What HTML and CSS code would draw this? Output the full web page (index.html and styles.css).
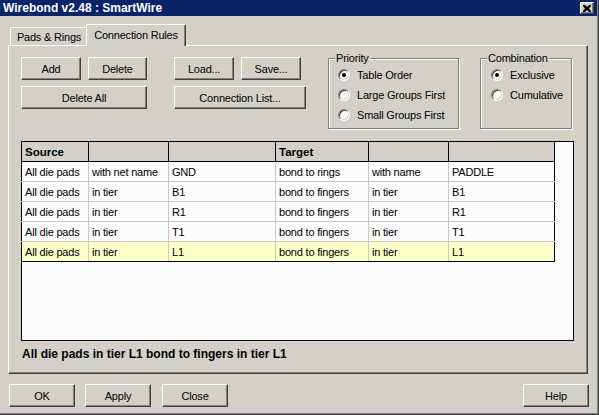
FILE: index.html
```html
<!DOCTYPE html>
<html>
<head>
<meta charset="utf-8">
<title>Wirebond v2.48 : SmartWire</title>
<link rel="stylesheet" href="styles.css">
</head>
<body>
<div class="window">
  <div class="titlebar">
    <span class="title">Wirebond v2.48 : SmartWire</span>
    <span class="close-btn">
      <svg width="8" height="7" viewBox="0 0 8 7"><path d="M0 0h2l2 2 2-2h2v1L6 3.5 8 6v1H6L4 5 2 7H0V6l2-2.5L0 1z" fill="#000"/></svg>
    </span>
  </div>
  <div class="tabs">
    <div class="tab">Pads &amp; Rings</div>
    <div class="tab active">Connection Rules</div>
  </div>
  <div class="panel">
    <div class="controls">
      <div class="btn-grid g1">
        <button class="btn">Add</button>
        <button class="btn">Delete</button>
        <button class="btn wide">Delete All</button>
      </div>
      <div class="btn-grid g2">
        <button class="btn">Load...</button>
        <button class="btn">Save...</button>
        <button class="btn wide">Connection List...</button>
      </div>
      <div class="group priority">
        <span class="group-label">Priority</span>
        <div class="radio-row"><span class="radio checked"></span><span>Table Order</span></div>
        <div class="radio-row"><span class="radio"></span><span>Large Groups First</span></div>
        <div class="radio-row"><span class="radio"></span><span>Small Groups First</span></div>
      </div>
      <div class="group combination">
        <span class="group-label">Combination</span>
        <div class="radio-row"><span class="radio checked"></span><span>Exclusive</span></div>
        <div class="radio-row"><span class="radio"></span><span>Cumulative</span></div>
      </div>
    </div>
    <div class="listview">
      <table class="grid">
        <colgroup>
          <col class="c1"><col class="c2"><col class="c3"><col class="c4"><col class="c5"><col class="c6">
        </colgroup>
        <thead>
          <tr><th>Source</th><th></th><th></th><th>Target</th><th></th><th></th></tr>
        </thead>
        <tbody>
          <tr><td>All die pads</td><td>with net name</td><td>GND</td><td>bond to rings</td><td>with name</td><td>PADDLE</td></tr>
          <tr><td>All die pads</td><td>in tier</td><td>B1</td><td>bond to fingers</td><td>in tier</td><td>B1</td></tr>
          <tr><td>All die pads</td><td>in tier</td><td>R1</td><td>bond to fingers</td><td>in tier</td><td>R1</td></tr>
          <tr><td>All die pads</td><td>in tier</td><td>T1</td><td>bond to fingers</td><td>in tier</td><td>T1</td></tr>
          <tr class="selected"><td>All die pads</td><td>in tier</td><td>L1</td><td>bond to fingers</td><td>in tier</td><td>L1</td></tr>
        </tbody>
      </table>
    </div>
    <div class="status">All die pads in tier L1 bond to fingers in tier L1</div>
  </div>
  <div class="footer">
    <button class="btn fbtn">OK</button>
    <button class="btn fbtn">Apply</button>
    <button class="btn fbtn close">Close</button>
    <button class="btn fbtn help">Help</button>
  </div>
</div>
</body>
</html>
```
FILE: styles.css
```css
* { box-sizing: border-box; }
html, body { margin: 0; padding: 0; }
body {
  width: 599px;
  height: 415px;
  overflow: hidden;
  background: #d4d0c8;
  font-family: "Liberation Sans", Arial, sans-serif;
  font-size: 11px;
  letter-spacing: -0.2px;
  color: #000;
}
.window {
  width: 599px;
  height: 415px;
  background: #d4d0c8;
  border-right: 1px solid #404040;
  border-bottom: 1px solid #404040;
  box-shadow: inset -1px -1px 0 #808080;
  display: flex;
  flex-direction: column;
}
.titlebar {
  height: 16px;
  background: #0a246a;
  margin-right: 1px;
  display: flex;
  align-items: center;
  justify-content: space-between;
  padding: 0 3px 0 3px;
}
.title {
  color: #fff;
  font-weight: bold;
  font-size: 12px;
  letter-spacing: 0;
  line-height: 16px;
  white-space: nowrap;
}
.close-btn {
  width: 14px;
  height: 12px;
  background: #d4d0c8;
  border: 1px solid;
  border-color: #fff #404040 #404040 #fff;
  box-shadow: inset -1px -1px 0 #808080;
  display: flex;
  align-items: center;
  justify-content: center;
}
.tabs {
  display: flex;
  align-items: flex-end;
  height: 29px;
  padding-left: 10px;
}
.tab {
  height: 18px;
  width: 78px;
  border: 1px solid;
  border-bottom: none;
  border-color: #fff #404040 #404040 #fff;
  border-radius: 2px 2px 0 0;
  box-shadow: inset -1px 0 0 #808080;
  padding-top: 3px;
  text-align: center;
  white-space: nowrap;
}
.tab.active {
  height: 22px;
  width: 100px;
  margin-left: -2px;
  margin-bottom: -1px;
  padding-top: 4px;
  background: #d4d0c8;
  position: relative;
  z-index: 1;
}
.panel {
  margin-left: 8px;
  width: 580px;
  height: 329px;
  border: 1px solid;
  border-color: #fff #404040 #404040 #fff;
  box-shadow: inset -1px -1px 0 #808080;
  padding: 11px 0 0 12px;
  display: flex;
  flex-direction: column;
}
.controls {
  display: flex;
  height: 72px;
}
.btn {
  font-family: inherit;
  font-size: 11px;
  letter-spacing: -0.2px;
  color: #000;
  background: #d4d0c8;
  border: 1px solid;
  border-color: #fff #404040 #404040 #fff;
  box-shadow: inset -1px -1px 0 #808080;
  padding: 0;
  margin: 0;
  height: 23px;
  border-radius: 0;
}
.btn-grid {
  display: grid;
  grid-template-rows: 23px 23px;
  row-gap: 6px;
  column-gap: 7px;
  align-content: start;
}
.btn-grid .wide { grid-column: 1 / span 2; }
.g1 { grid-template-columns: 60px 59px; }
.g2 { grid-template-columns: 60px 60px; margin-left: 27px; }
.g2 .wide { width: 132px; }
.group {
  position: relative;
  margin-top: 1px;
  height: 71px;
  border: 1px solid #808080;
  box-shadow: inset 1px 1px 0 #fff, 1px 1px 0 #fff;
  padding: 6px 0 0 9px;
}
.priority { margin-left: 27px; width: 131px; }
.combination { margin-left: 21px; width: 92px; padding-left: 10px; }
.group-label {
  position: absolute;
  top: -8px;
  left: 6px;
  background: #d4d0c8;
  padding: 0 1px;
  line-height: 14px;
}
.radio-row {
  height: 20px;
  display: flex;
  align-items: center;
  gap: 7px;
  white-space: nowrap;
}
.radio {
  width: 12px;
  height: 12px;
  flex: none;
  border-radius: 50%;
  background: #fff;
  border: 1px solid;
  border-color: #808080 #fff #fff #808080;
  box-shadow: inset 1px 1px 0 #404040, inset -1px -1px 0 #d4d0c8;
  display: flex;
  align-items: center;
  justify-content: center;
}
.radio.checked::after {
  content: "";
  width: 4px;
  height: 4px;
  border-radius: 50%;
  background: #000;
}
.listview {
  margin-top: 12px;
  width: 553px;
  height: 200px;
  border: 1px solid #000;
  background: #fcfcfc;
}
.grid {
  border-collapse: collapse;
  table-layout: fixed;
  width: 534px;
  border-left: 1px solid #000;
  margin-left: -1px;
  margin-top: -1px;
}
.grid .c1 { width: 67px; }
.grid .c2 { width: 80px; }
.grid .c3 { width: 107px; }
.grid .c4 { width: 93px; }
.grid .c5 { width: 80px; }
.grid .c6 { width: 106px; }
.grid th {
  height: 20px;
  background: #d4d0c8;
  border-top: 1px solid #000;
  border-right: 1px solid #000;
  border-bottom: 1px solid #000;
  text-align: left;
  font-weight: bold;
  font-size: 11.5px;
  letter-spacing: 0;
  padding: 0 3px;
  white-space: nowrap;
}
.grid td {
  height: 20px;
  border-right: 1px solid #c8c8c8;
  border-bottom: 1px solid #c8c8c8;
  padding: 0 3px;
  white-space: nowrap;
  overflow: hidden;
}
.grid td:last-child { border-right: 1px solid #000; }
.grid tr.selected td { background: #ffffc8; border-bottom: 1px solid #000; }
.status {
  margin-top: 6px;
  font-weight: bold;
  font-size: 12px;
  letter-spacing: 0;
  line-height: 14px;
  padding-left: 1px;
}
.footer {
  display: flex;
  margin-top: 10px;
  padding: 0 9px 0 9px;
}
.fbtn { width: 66px; margin-right: 10px; }
.fbtn.close { margin-left: 1px; }
.fbtn.help { margin-left: auto; margin-right: 0; }
```
